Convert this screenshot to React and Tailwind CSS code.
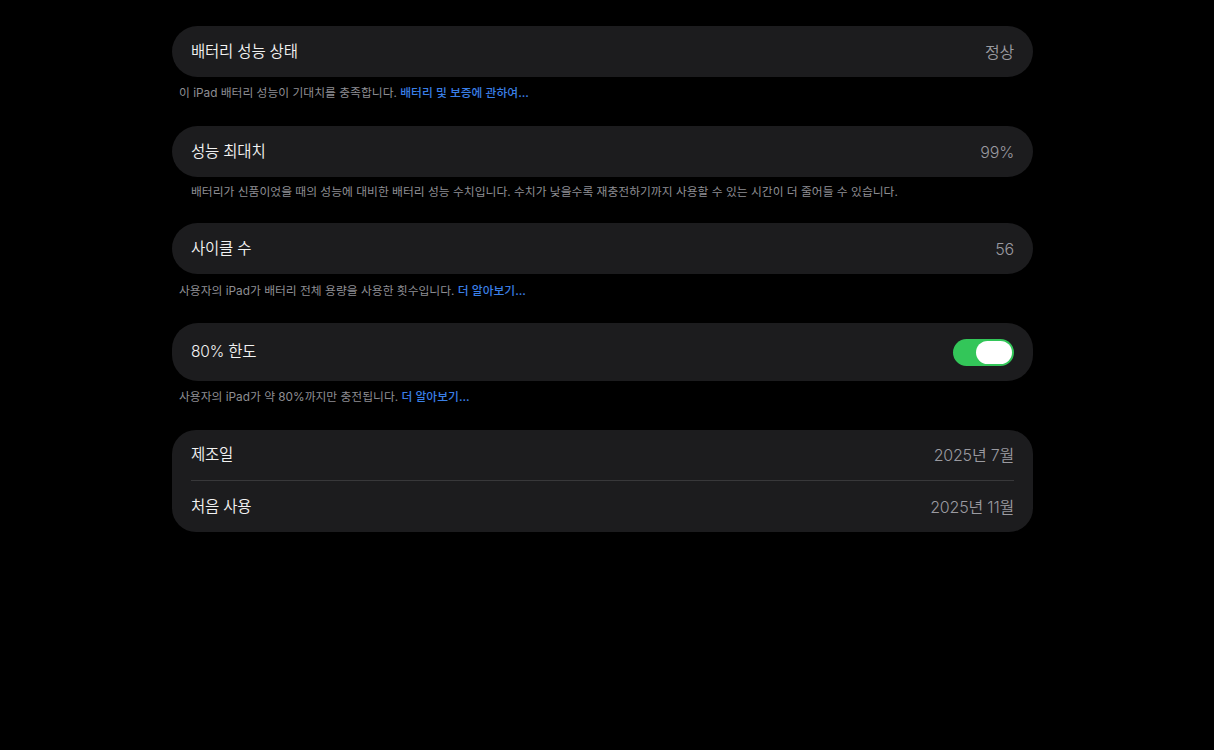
import React from 'react';

const font = { fontFamily: 'Inter, "Noto Sans CJK KR", sans-serif' };

function Toggle() {
  return (
    <div className="w-[61px] h-[27px] rounded-full bg-[#33c659] flex items-center justify-end px-[2px]">
      <div className="w-[36px] h-[23px] rounded-full bg-white" />
    </div>
  );
}

function Row({ label, value, children, tall }) {
  return (
    <div
      className={`${tall ? 'h-[58px]' : 'h-[51px]'} rounded-[26px] bg-[#1c1c1e] px-[19px] flex items-center justify-between`}
    >
      <span className="text-[15.5px] tracking-[-0.2px] font-[350] text-[#f2f2f2]">{label}</span>
      {value && <span className="text-[16px] tracking-[-0.2px] font-[350] text-[#9a9aa0]">{value}</span>}
      {children}
    </div>
  );
}

function Note({ children, className }) {
  return <p className={`text-[11.8px] leading-[16px] text-[#8e8e93] ${className}`}>{children}</p>;
}

function Link({ children }) {
  return <span className="text-[#3a7fe6] font-medium">{children}</span>;
}

export default function App() {
  return (
    <div className="min-h-screen bg-black" style={font}>
      <div className="ml-[172px] w-[861px] pt-[26px]">
        <Row label="배터리 성능 상태" value="정상" />
        <Note className="pl-[7px] pt-[8px] pb-[25px]">
          이 iPad 배터리 성능이 기대치를 충족합니다. <Link>배터리 및 보증에 관하여...</Link>
        </Note>

        <Row label="성능 최대치" value="99%" />
        <Note className="pl-[19px] pt-[7px] pb-[23px]">
          배터리가 신품이었을 때의 성능에 대비한 배터리 성능 수치입니다. 수치가 낮을수록 재충전하기까지 사용할 수 있는 시간이 더 줄어들 수 있습니다.
        </Note>

        <Row label="사이클 수" value="56" />
        <Note className="pl-[7px] pt-[9px] pb-[24px]">
          사용자의 iPad가 배터리 전체 용량을 사용한 횟수입니다. <Link>더 알아보기...</Link>
        </Note>

        <Row label="80% 한도" tall>
          <Toggle />
        </Row>
        <Note className="pl-[7px] pt-[8px] pb-[25px]">
          사용자의 iPad가 약 80%까지만 충전됩니다. <Link>더 알아보기...</Link>
        </Note>

        <div className="rounded-[24px] bg-[#1c1c1e] px-[19px]">
          <div className="h-[51px] flex items-center justify-between border-b border-[#38383a]">
            <span className="text-[15.5px] tracking-[-0.2px] font-[350] text-[#f2f2f2]">제조일</span>
            <span className="text-[16px] tracking-[-0.2px] font-[350] text-[#9a9aa0]">2025년 7월</span>
          </div>
          <div className="h-[51px] flex items-center justify-between">
            <span className="text-[15.5px] tracking-[-0.2px] font-[350] text-[#f2f2f2]">처음 사용</span>
            <span className="text-[16px] tracking-[-0.2px] font-[350] text-[#9a9aa0]">2025년 11월</span>
          </div>
        </div>
      </div>
    </div>
  );
}
